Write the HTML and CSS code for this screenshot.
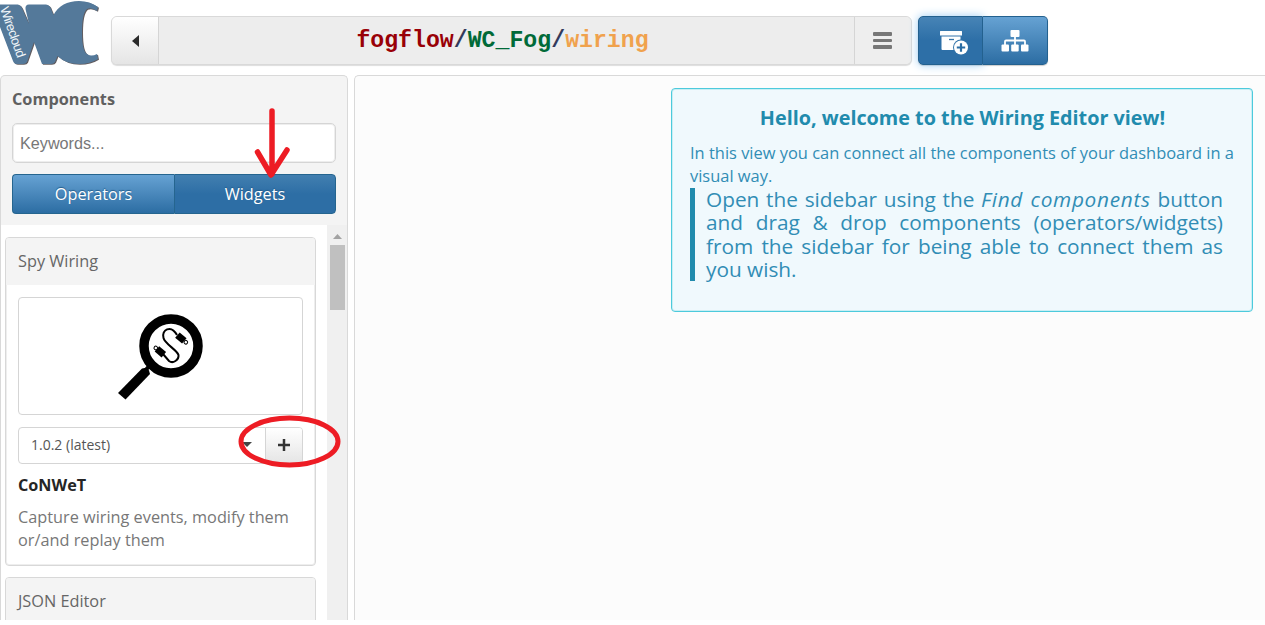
FILE: index.html
```html
<!DOCTYPE html>
<html lang="en">
<head>
<meta charset="utf-8">
<title>Wirecloud - Wiring Editor</title>
<link rel="stylesheet" href="styles.css">
</head>
<body>
<div class="app">
  <header class="topbar">
    <svg class="logo" width="104" height="70" viewBox="0 0 104 70">
      <g id="wc">
        <path class="logo-shadow" transform="translate(1 .8)" d="M0 4.500H18Q21 5 22 8L29 24L25.500 9Q25 4.500 29 4.500H46Q50 5 51 9L53.500 15Q61 1 79 1Q90 1 98 7L97 11Q91 7 87 9Q82 13 82 32Q82 51 87 54Q91 57 97 54L98 59Q90 64 79 64Q66 64 57.500 56L55 62Q54 64 51 64H42L34 42L27 62Q26 64 23 64H17Q14 64 13 61L0 27Z"/>
        <path class="logo-fill" d="M0 4.500H18Q21 5 22 8L29 24L25.500 9Q25 4.500 29 4.500H46Q50 5 51 9L53.500 15Q61 1 79 1Q90 1 98 7L97 11Q91 7 87 9Q82 13 82 32Q82 51 87 54Q91 57 97 54L98 59Q90 64 79 64Q66 64 57.500 56L55 62Q54 64 51 64H42L34 42L27 62Q26 64 23 64H17Q14 64 13 61L0 27Z"/>
      </g>
      <text class="logo-text" transform="translate(0 8.500) rotate(71)" textLength="53">Wirecloud</text>
    </svg>
    <nav class="pathbar">
      <button class="back"><svg width="8" height="12" viewBox="0 0 8 12"><path d="M8 0V12L1 6Z"/></svg></button>
      <div class="path"><span class="owner">fogflow</span>/<span class="dash">WC_Fog</span>/<span class="view">wiring</span></div>
      <button class="menu"><i></i><i></i><i></i></button>
    </nav>
    <div class="tools">
      <button class="tool active">
        <svg width="30" height="26" viewBox="0 0 30 26"><path fill="#fff" d="M1 1.500Q1 1 1.500 1H22.500Q23 1 23 1.500V5.500H1ZM2.500 6.500H21.500V20H3.500Q2.500 20 2.500 19Z"/><path stroke="#3674a8" stroke-width="1.300" d="M10 9.500H15"/><circle cx="22" cy="17.500" r="8" fill="#3072a8"/><circle cx="22" cy="17.500" r="7" fill="#fff"/><path stroke="#2b6da3" stroke-width="2.200" d="M17.800 17.500H26.200M22 13.300V21.700"/></svg>
      </button>
      <button class="tool">
        <svg width="28" height="22" viewBox="0 0 28 22"><g fill="#fff"><rect x="9.500" width="9" height="7" rx="1"/><rect x=".5" y="14.500" width="7.500" height="7" rx="1"/><rect x="10.200" y="14.500" width="7.500" height="7" rx="1"/><rect x="20" y="14.500" width="7.500" height="7" rx="1"/></g><path fill="none" stroke="#fff" stroke-width="1.800" d="M14 6V15M4 15V11.500Q4 10.500 5 10.500H23Q24 10.500 24 11.500V15"/></svg>
      </button>
    </div>
  </header>
  <main class="workspace">
    <aside class="sidebar">
      <section class="finder">
        <h2>Components</h2>
        <input class="search" placeholder="Keywords...">
        <div class="tabs"><button class="tab">Operators</button><button class="tab pressed">Widgets</button></div>
      </section>
      <div class="results">
        <div class="cards">
          <article class="card">
            <h3>Spy Wiring</h3>
            <div class="card-body">
              <div class="thumb">
                <svg width="90" height="90" viewBox="0 0 90 90">
                  <path d="M4 80L28 55.500Q33 54 35 57.500L36 61L11.500 86.500Z"/>
                  <path stroke="#000" stroke-width="4" d="M30 59L37 51"/>
                  <circle cx="57" cy="33" r="27" fill="#fff" stroke="#000" stroke-width="9.500"/>
                  <path fill="none" stroke="#000" stroke-width="2" d="M63 22C57 11 47 17 49.500 25C51 31 63 37 64.500 42C65 47 59 51 55 48L49 41"/>
                  <g transform="translate(68 26) rotate(40)"><rect x="-6" y="-3.500" width="9" height="7"/><circle cx="5" r="1.800" fill="#fff" stroke="#000" stroke-width="1"/></g>
                  <g transform="translate(46 38.500) rotate(220)"><rect x="-5" y="-3.500" width="9" height="7"/><circle cx="5.500" r="1.800" fill="#fff" stroke="#000" stroke-width="1"/></g>
                </svg>
              </div>
              <div class="version-row"><div class="version"><span>1.0.2 (latest)</span><svg width="10" height="6" viewBox="0 0 10 6"><path d="M0 0H10L5 5Z"/></svg></div><button class="add"><svg width="12" height="12" viewBox="0 0 12 12"><path d="M0 6H12M6 0V12"/></svg></button></div>
              <h4>CoNWeT</h4>
              <p>Capture wiring events, modify them<br>or/and replay them</p>
            </div>
          </article>
          <article class="card"><h3>JSON Editor</h3></article>
        </div>
        <div class="scrollbar"><svg width="9" height="5" viewBox="0 0 9 5"><path d="M0 5L4.500 0L9 5Z"/></svg><div class="thumbbar"></div></div>
      </div>
    </aside>
    <section class="canvas">
      <div class="welcome">
        <h1>Hello, welcome to the Wiring Editor view!</h1>
        <p>In this view you can connect all the components of your dashboard in a<br>visual way.</p>
        <blockquote>Open the sidebar using the <em>Find components</em> button and drag &amp; drop components (operators/widgets) from the sidebar for being able to connect them as you wish.</blockquote>
      </div>
    </section>
  </main>
  <svg class="marks" width="360" height="480" viewBox="0 0 360 480"><path stroke-width="5.500" d="M272 111V174M257.500 152L271 175L287 150"/><ellipse cx="289.500" cy="441.500" rx="48.500" ry="23.500" stroke-width="5"/></svg>
</div>
</body>
</html>
```
FILE: styles.css
```css
* { box-sizing: border-box; }
body { margin: 0; background: #fff; font-family: "Open Sans", "Noto Sans", sans-serif; color: #666; overflow: hidden; }
h1, h2, h3, h4, p, blockquote { margin: 0; }
button { margin: 0; padding: 0; border: 0; font: inherit; display: flex; align-items: center; justify-content: center; }
svg { display: block; flex: none; }
.app { position: relative; width: 1265px; height: 620px; overflow: hidden; display: flex; flex-direction: column; }
.topbar { height: 75px; flex: none; display: flex; align-items: flex-start; }
.logo { margin-right: 7px; }
.logo-fill { fill: #54799a; }
.logo-shadow { fill: #625d60; }
.logo-text { font: 13px "Liberation Sans", sans-serif; fill: #f0f5f9; }
.pathbar { width: 801px; height: 49px; margin-top: 16px; display: flex; border: 1px solid #d9d9d9; border-radius: 6px; background: #ededed; overflow: hidden; box-shadow: 0 1px 1px #ddd; }
.back { width: 47px; border-right: 1px solid #d5d5d5; background: linear-gradient(#fff, #e5e5e5); fill: #2b2b2b; }
.path { flex: 1; text-align: center; padding: 2px 8px 0 0; font: bold 23.2px/45px "Liberation Mono", monospace; color: #333a5c; }
.owner { color: #990007; }
.dash { color: #006a38; }
.view { color: #f0a24d; }
.menu { width: 57px; border-left: 1px solid #d5d5d5; background: #eee; flex-direction: column; gap: 3px; padding-right: 1px; }
.menu i { width: 19px; height: 3.600px; border-radius: 1px; background: #777; }
.tools { margin: 16px 0 0 6px; display: flex; width: 130px; height: 49px; border-radius: 5px; box-shadow: 0 1px 1px #ccc; }
.tool { width: 65px; border: 1px solid #23618f; border-left-width: 0; border-radius: 0 5px 5px 0; background: linear-gradient(#66a2d3, #2c6da3); }
.tool.active { border-left-width: 1px; border-radius: 5px 0 0 5px; background: linear-gradient(#4784b6, #2d6fa7 50%); box-shadow: 0 0 10px #9dcdf3; }
.tool.active svg { margin: 4px 0 0 7px; }
.workspace { flex: 1; min-height: 0; display: flex; gap: 6px; }
.sidebar { width: 348px; border: 1px solid #d9d9d9; border-width: 1px 1px 0; border-radius: 5px 5px 0 0; background: #f4f4f4; display: flex; flex-direction: column; overflow: hidden; }
.finder { height: 149px; flex: none; padding: 11px 12px 0 11px; }
.finder h2 { font-size: 16.300px; line-height: 24px; color: #606060; }
.search { display: block; width: 324px; height: 40px; margin-top: 12px; padding: 0 7px; border: 1px solid #d5d5d5; border-radius: 5px; background: #fff; box-shadow: inset 0 0 0 1px #eee; font: 16.200px "Liberation Sans", sans-serif; }
.search::placeholder { color: #777; }
.tabs { display: flex; width: 324px; height: 40px; margin-top: 11px; }
.tab { width: 162px; color: #fff; font-size: 16.300px; border: 1px solid #25658f; border-right: 0; border-radius: 4px 0 0 4px; background: linear-gradient(#66a2d3, #2c6da3); text-shadow: 0 -1px 1px #235e8d; }
.tab.pressed { border-right: 1px solid #25658f; border-radius: 0 4px 4px 0; background: linear-gradient(#427fb0, #2d6ea5 50%); }
.results { flex: 1; min-height: 0; display: flex; background: #fff; }
.cards { width: 326px; padding: 12px 12px 0 4px; }
.card { width: 311px; border: 1px solid #d8d8d8; border-radius: 4px; margin-bottom: 11px; background: #fff; box-shadow: inset 0 0 0 1px #eee; overflow: hidden; }
.card h3 { height: 47px; padding-left: 12px; font-size: 16.300px; font-weight: 400; line-height: 47px; background: #f4f4f4; color: #666; }
.card-body { padding: 12px 12px 12px; }
.thumb { height: 118px; border: 1px solid #d5d5d5; border-radius: 4px; display: flex; justify-content: center; align-items: center; }
.thumb svg { margin: 3px 4px 0 0; }
.version-row { display: flex; height: 37px; margin-top: 12px; border: 1px solid #d5d5d5; border-radius: 4px; overflow: hidden; }
.version { flex: 1; display: flex; align-items: center; justify-content: space-between; padding: 0 13px 2px 12px; font-size: 14px; color: #555; }
.version svg { fill: #444; }
.add { width: 37px; border-left: 1px solid #d5d5d5; background: linear-gradient(#fff, #e5e5e5); padding-bottom: 2px; }
.add path { stroke: #333; stroke-width: 2.500px; }
.card h4 { margin-top: 10px; font-size: 16.200px; line-height: 23px; color: #252525; }
.card p { margin-top: 9px; font-size: 16.300px; line-height: 23.300px; color: #777; }
.scrollbar { width: 20px; background: #f0f0f0; display: flex; flex-direction: column; align-items: center; padding-top: 9px; }
.scrollbar svg { fill: #a3a3a3; }
.thumbbar { width: 15px; height: 65px; margin-top: 6px; background: #c0c0c0; }
.canvas { width: 911px; border: 1px solid #d9d9d9; border-width: 1px 0 0 1px; border-radius: 5px 0 0 0; background: #fcfcfc; padding: 12px 12px 0 0; }
.welcome { width: 582px; height: 224px; margin-left: auto; border: 1px solid #4dcadc; border-radius: 4px; background: #f0f9fd; box-shadow: inset 0 0 0 1px #c9eef4; padding: 15px 17px 0 18px; color: #318db5; }
.welcome h1 { text-align: center; font-size: 19.800px; line-height: 28px; color: #218bad; }
.welcome p { margin: 9px 0 1px; font-size: 16.450px; line-height: 23px; white-space: nowrap; }
.welcome blockquote { width: 533px; border-left: 5px solid #218bad; padding-left: 11px; font-size: 20.800px; line-height: 23.300px; text-align: justify; }
.welcome em { letter-spacing: .7px; }
.marks { position: absolute; left: 0; top: 0; fill: none; stroke: #ed1c24; stroke-linecap: round; stroke-linejoin: round; pointer-events: none; }
```
